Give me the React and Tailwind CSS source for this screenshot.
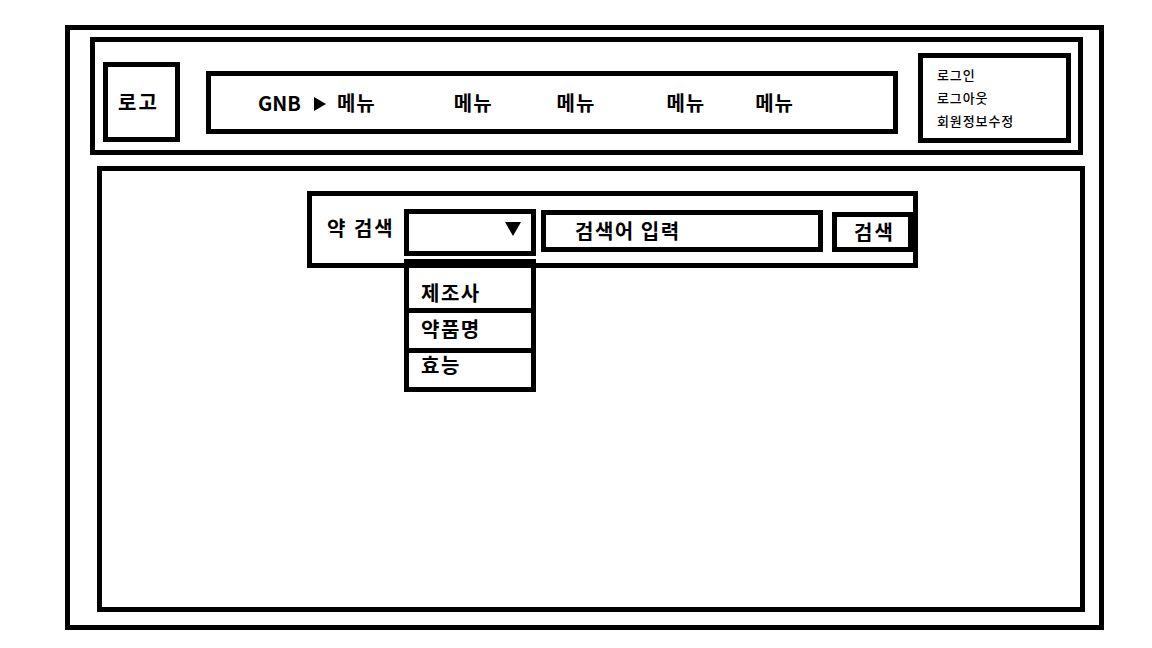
export default function App() {
  const menus = [
    { label: '메뉴', ml: 'ml-[11px]' },
    { label: '메뉴', ml: 'ml-[78px]' },
    { label: '메뉴', ml: 'ml-[64px]' },
    { label: '메뉴', ml: 'ml-[71px]' },
    { label: '메뉴', ml: 'ml-[50px]' },
  ];

  return (
    <div
      className="w-[1152px] h-[648px] bg-white text-black pt-[25px] pl-[65px]"
      style={{ fontFamily: '"Noto Sans CJK KR", "Noto Sans", sans-serif' }}
    >
      <div className="w-[1039px] h-[605px] border-[5px] border-black">
        {/* header */}
        <div className="ml-[20px] mt-[7px] w-[993px] h-[118px] border-[5px] border-black flex items-start">
          <div className="ml-[8px] mt-[20px] w-[77px] h-[80px] border-[5px] border-black flex items-center justify-center pr-[6px] text-[20px] font-bold tracking-[2px]">
            로고
          </div>
          <div className="ml-[26px] mt-[29px] w-[692px] h-[63px] border-[5px] border-black flex items-center pl-[47px] text-[20px] font-bold">
            <span>GNB</span>
            <svg width="12" height="14" viewBox="0 0 12 14" className="ml-[13px] mt-[2px]">
              <polygon points="0,0 12,7 0,14" fill="black" />
            </svg>
            {menus.map((m, i) => (
              <span key={i} className={`${m.ml} tracking-[1px]`}>{m.label}</span>
            ))}
          </div>
          <div className="ml-[20px] mt-[11px] w-[153px] h-[90px] border-[5px] border-black pl-[14px] pt-[5px] text-[13px] font-medium tracking-[0.9px] leading-[23px]">
            <div>로그인</div>
            <div>로그아웃</div>
            <div>회원정보수정</div>
          </div>
        </div>

        {/* main */}
        <div className="ml-[27px] mt-[11px] w-[988px] h-[446px] border-[5px] border-black pl-[205px] pt-[20px]">
          <div className="relative w-[611px] h-[77px] border-[5px] border-black flex items-start">
            <div className="w-[92px] pl-[15px] mt-[20px] text-[20px] font-bold leading-[24px] tracking-[2px] whitespace-nowrap">약 검색</div>
            <div className="mt-[13px] w-[132px] h-[47px] border-[5px] border-black relative">
              <svg width="16" height="14" viewBox="0 0 16 14" className="absolute right-[10px] top-[8px]">
                <polygon points="0,0 16,0 8,14" fill="black" />
              </svg>
            </div>
            <div className="ml-[5px] mt-[14px] w-[282px] h-[42px] border-[5px] border-black flex items-center pl-[29px] text-[20px] font-bold tracking-[1.5px]">
              검색어 입력
            </div>
            <div className="ml-[9px] mt-[16px] w-[81px] h-[40px] border-[5px] border-black flex items-center justify-center pl-[4px] text-[20px] font-bold tracking-[2px]">
              검색
            </div>

            {/* dropdown */}
            <div className="absolute left-[92px] top-[63px] w-[132px] border-[5px] border-t-[6px] border-black text-[20px] font-bold tracking-[1.5px]">
              <div className="h-[48px] border-b-[5px] border-black pl-[12px] pt-[16px] leading-[24px]">제조사</div>
              <div className="h-[40px] border-b-[5px] border-black pl-[12px] pt-[4px] leading-[24px]">약품명</div>
              <div className="h-[34px] pl-[12px] leading-[24px]">효능</div>
            </div>
          </div>
        </div>
      </div>
    </div>
  );
}
